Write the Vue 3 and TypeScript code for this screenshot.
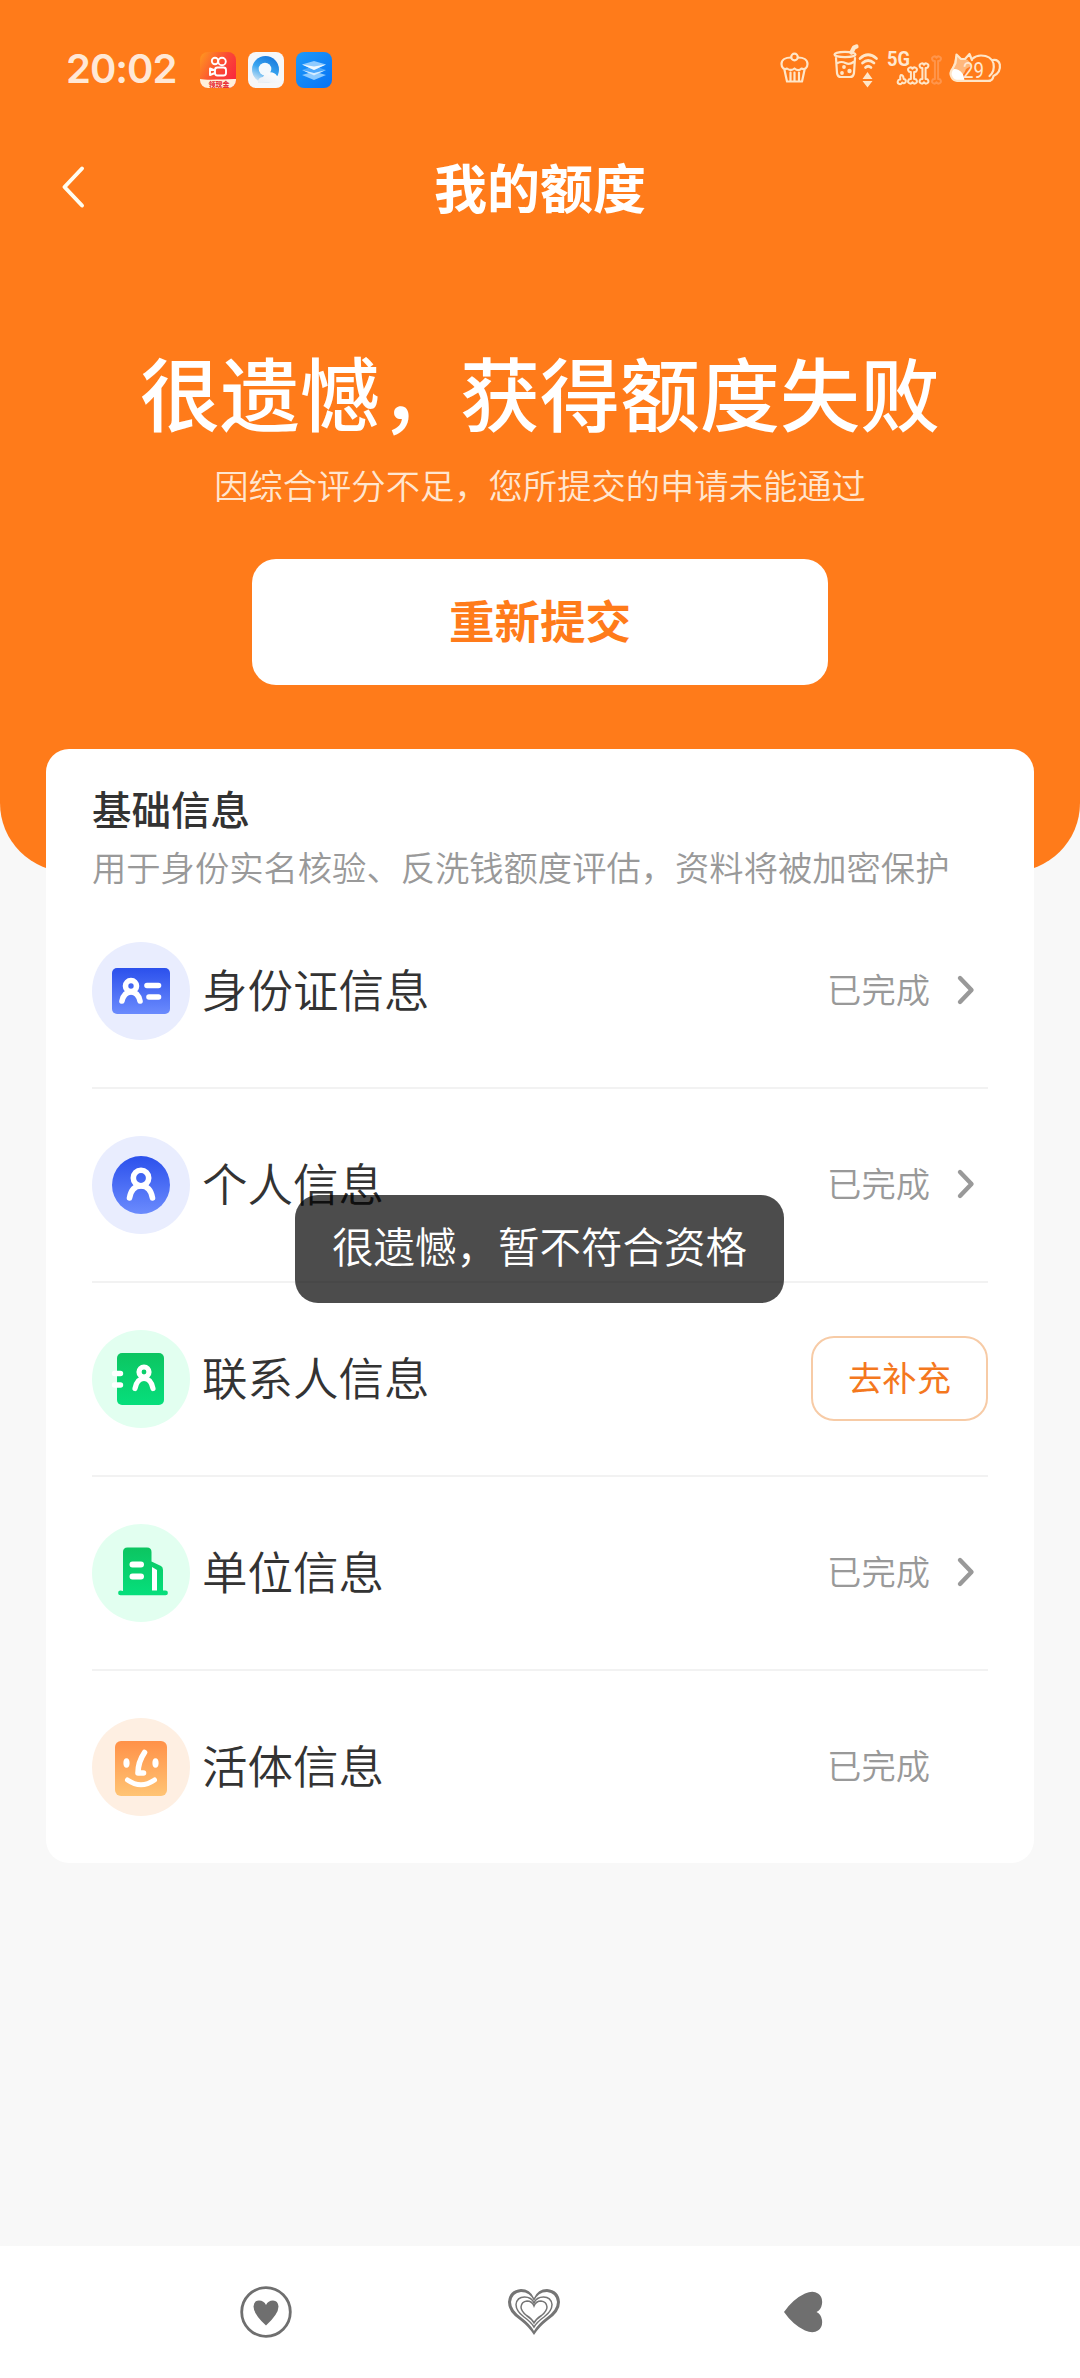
<script setup lang="ts">
type IconName = 'idcard' | 'person' | 'contact' | 'company' | 'face'

interface InfoRow {
  icon: IconName
  label: string
  status: 'done' | 'todo'
  arrow: boolean
}

const rows: InfoRow[] = [
  { icon: 'idcard', label: '身份证信息', status: 'done', arrow: true },
  { icon: 'person', label: '个人信息', status: 'done', arrow: true },
  { icon: 'contact', label: '联系人信息', status: 'todo', arrow: false },
  { icon: 'company', label: '单位信息', status: 'done', arrow: true },
  { icon: 'face', label: '活体信息', status: 'done', arrow: false },
]

// Outline of an upright bone centred on x, from top to bottom.
function bone(x: number, top: number, bottom: number): string {
  const knob = 'A2.3 2.3 0 1 1'
  return (
    `M${x - 1.6} ${bottom - 5}V${top + 5}${knob} ${x} ${top + 1.8}${knob} ${x + 1.6} ${top + 5}` +
    `V${bottom - 5}${knob} ${x} ${bottom - 1.8}${knob} ${x - 1.6} ${bottom - 5}z`
  )
}
</script>

<template>
  <div class="page">
    <header class="hero">
      <div class="status-bar">
        <span class="clock">20:02</span>
        <div class="apps">
          <svg width="36" height="36" viewBox="0 0 36 36">
            <defs>
              <linearGradient id="ks" x1="0" y1="0" x2="1" y2="0.6">
                <stop offset="0" stop-color="#ff9a1e" />
                <stop offset="0.6" stop-color="#fb4a35" />
                <stop offset="1" stop-color="#fa2b3d" />
              </linearGradient>
              <clipPath id="ksClip"><rect width="36" height="36" rx="8" /></clipPath>
            </defs>
            <g clip-path="url(#ksClip)">
              <rect width="36" height="36" fill="url(#ks)" />
              <g fill="none" stroke="#fff" stroke-width="1.9" stroke-linejoin="round">
                <circle cx="15" cy="9" r="3.2" />
                <circle cx="22" cy="9.5" r="3.8" />
                <rect x="15" y="15.500" width="11" height="8" rx="2.500" />
                <path d="M15 18.500l-5-2v6.500l5-2" />
              </g>
              <path d="M0 27q5 1 17 .6T34 27l2 0v9H0z" fill="#fff1da" />
              <text x="19" y="34.500" text-anchor="middle" class="badge-text">领现金</text>
            </g>
          </svg>
          <svg width="36" height="36" viewBox="0 0 36 36">
            <defs>
              <linearGradient id="qb" x1="0.7" y1="0" x2="0.2" y2="1">
                <stop offset="0" stop-color="#1677dc" />
                <stop offset="0.5" stop-color="#39a5f0" />
                <stop offset="1" stop-color="#e4eef5" />
              </linearGradient>
              <linearGradient id="cloud" x1="0" y1="1" x2="1" y2="0">
                <stop offset="0" stop-color="#e9eef4" />
                <stop offset="1" stop-color="#ffffff" />
              </linearGradient>
            </defs>
            <rect width="36" height="36" rx="8" fill="#f6f7f9" />
            <circle cx="17.500" cy="17.500" r="13.500" fill="url(#qb)" />
            <circle cx="17" cy="17" r="6.300" fill="#f3f9fd" />
            <path d="M10 31a5 5 0 0 1 5-6 8 8 0 0 1 14-1q4 2 2.500 6.500z" fill="url(#cloud)" />
          </svg>
          <svg width="36" height="36" viewBox="0 0 36 36">
            <defs>
              <linearGradient id="st" x1="0" y1="0" x2="1" y2="1">
                <stop offset="0" stop-color="#1d9af9" />
                <stop offset="1" stop-color="#0872f5" />
              </linearGradient>
            </defs>
            <rect width="36" height="36" rx="8" fill="url(#st)" />
            <path d="M6 23l12-3.500L30 23l-12 5z" fill="#8ccaff" />
            <path d="M6 18l12-4 12 4-12 5.200z" fill="#4ba8fd" />
            <path d="M6 18l12 3 12-3-12 5.500z" fill="#d5ecff" />
            <path d="M6 12.500L18 9l12 3.500L18 18z" fill="#8fcbff" />
            <path d="M6 12.500l12 2 12-2L18 18z" fill="#f0f9ff" />
          </svg>
        </div>
        <svg class="sys" width="240" height="50" viewBox="0 0 240 50" fill="none" stroke="#ffe6c8" stroke-width="2.200" stroke-linecap="round" stroke-linejoin="round">
          <!-- cupcake -->
          <circle cx="14.500" cy="17" r="3.300" />
          <path d="M11 17.500C5.500 17.500 1.500 20 1.500 24c0 4 3 6 5.500 4.500 2.500 2 5 2 7.500 0 2.500 2 5 2 7 0 3 1.500 6-.5 6-4.500 0-4-4-6.500-9.500-6.500" />
          <path d="M4.500 30l2.500 11.500h15L24.500 30M10.500 32.500v8.500M14.500 32.500v8.500M19 32.500v8.500" />
          <!-- milk tea -->
          <ellipse cx="65" cy="14.500" rx="10.500" ry="2.700" />
          <path d="M56 18l1 15q.5 4 4 4h9q3.500 0 4-4l1-15M57.500 23q4-2 8 0t8-1" />
          <path d="M71.500 12.500l2.500-5 2.500-1" stroke-width="4.200" />
          <g fill="#ffe6c8" stroke="none">
            <circle cx="64" cy="27" r="1.900" />
            <circle cx="69.500" cy="31" r="2.200" />
            <circle cx="62" cy="33" r="1.900" />
            <path d="M87.500 32l5 7h-10zM87.500 47.500l5-6.500h-10z" />
          </g>
          <!-- wifi -->
          <path d="M80 18.500q8-7.500 16.500 0M82.500 23q5.500-5 11.500 0M85.500 27.500q2.500-2.500 5.500 0" stroke-width="2.700" />
          <!-- bone signal bars -->
          <g stroke-width="2">
            <path d="M120.300 39.500q-.5-4 .7-4.500 2.500 0 2.700 4A2.100 2.100 0 1 1 122.200 42.500A2.300 2.300 0 1 1 120.300 39.500z" />
            <path :d="bone(132.500, 27, 44)" />
            <path :d="bone(144, 23, 44)" />
            <path :d="bone(156.500, 16, 44)" stroke="#ff954b" />
          </g>
          <!-- cat battery -->
          <path d="M176 15.500q4 3 9 3.500 5 1 6 7l-5 3q-2 6-6 7l-8-7z" fill="#ffb87c" stroke="none" />
          <path d="M171.500 30q3-2 7 0 5 2 6 10.500h-9q-7-2-4-10.500z" fill="#fff" stroke="none" />
          <path d="M173 28l2.500-5 1-8.500L181 19h4l4.500-5 2.500 6" />
          <path d="M192 19q4-3.500 9-3.500 10 0 12.500 8 1.500 8-4 12.500" />
          <path d="M173 28q-4 5-1.500 9 2 3.800 5.500 3.800h33" />
          <path d="M212.500 20q6-1 7.300 4.500 1.200 8-6.300 11.500-1 4.800-4.500 4.800" />
          <g class="sys-text">
            <text x="107" y="25.500" class="net" textLength="23" lengthAdjust="spacingAndGlyphs">5G</text>
            <text x="183" y="38" class="bat" textLength="21" lengthAdjust="spacingAndGlyphs">29</text>
          </g>
        </svg>
      </div>

      <nav class="title-bar">
        <svg class="back" width="26" height="46" viewBox="0 0 26 46" fill="none" stroke="#fffdf0" stroke-width="4" stroke-linecap="round" stroke-linejoin="round">
          <path d="M22 4.500L4.500 23 22 41.500" />
        </svg>
        <h1>我的额度</h1>
      </nav>

      <h2 class="result">很遗憾，获得额度失败</h2>
      <p class="reason">因综合评分不足，您所提交的申请未能通过</p>
      <button class="resubmit">重新提交</button>
    </header>

    <main class="card">
      <h3>基础信息</h3>
      <p class="hint">用于身份实名核验、反洗钱额度评估，资料将被加密保护</p>
      <ul>
        <li v-for="row in rows" :key="row.label">
          <svg class="row-icon" width="98" height="98" viewBox="0 0 98 98" fill="none" stroke-linecap="round" stroke-linejoin="round">
            <defs>
              <linearGradient id="blue" x1="0" y1="0" x2="0" y2="1">
                <stop offset="0" stop-color="#2b50ec" /><stop offset="1" stop-color="#6b8bfd" />
              </linearGradient>
              <linearGradient id="green" x1="0" y1="0" x2="0" y2="1">
                <stop offset="0" stop-color="#0cc561" /><stop offset="1" stop-color="#06df7c" />
              </linearGradient>
              <linearGradient id="amber" x1="0" y1="0" x2="0" y2="1">
                <stop offset="0" stop-color="#ff9148" /><stop offset="1" stop-color="#ffc474" />
              </linearGradient>
            </defs>
            <template v-if="row.icon === 'idcard'">
              <circle cx="49" cy="49" r="49" fill="#e9edfe" />
              <rect x="20" y="26" width="58" height="46" rx="5" fill="url(#blue)" />
              <g stroke="#fff" stroke-width="5.600">
                <circle cx="39" cy="44" r="5.500" />
                <path d="M30 59q2-9 9-9t9 9" />
                <path d="M55 43.500H66.500M57 55H66.500" />
              </g>
            </template>
            <template v-else-if="row.icon === 'person'">
              <circle cx="49" cy="49" r="49" fill="#e9edfe" />
              <circle cx="49" cy="49" r="29" fill="url(#blue)" />
              <g stroke="#fff" stroke-width="5.600">
                <circle cx="49" cy="42" r="7.700" />
                <path d="M37.500 62q2-12 11.500-12t11.500 12" />
              </g>
            </template>
            <template v-else-if="row.icon === 'contact'">
              <circle cx="49" cy="49" r="49" fill="#e2fff0" />
              <rect x="25" y="23" width="47" height="52" rx="5" fill="url(#green)" />
              <path d="M22.500 43.500H28.500M22.500 55H28.500" stroke="#fff" stroke-width="5.400" />
              <g stroke="#fff" stroke-width="5.200">
                <circle cx="52" cy="42" r="5" />
                <path d="M43 58.500q2-10 9-10t9 10" />
              </g>
            </template>
            <template v-else-if="row.icon === 'company'">
              <circle cx="49" cy="49" r="49" fill="#e2fff0" />
              <path d="M31 67V28q0-4.500 4.500-4.500H55q4.500 0 4.500 4.500v9.500L69 42q2 1.200 2 4v20.500h2.500a2.400 2.400 0 0 1 0 4.800H28.500a2.400 2.400 0 0 1 0-4.800z" fill="url(#green)" />
              <path d="M60 43l5 3v20.500h-5z" fill="#fff" />
              <path d="M40.500 40.500H49M40.500 52.500H49" stroke="#fff" stroke-width="6" />
            </template>
            <template v-else>
              <circle cx="49" cy="49" r="49" fill="#feefe2" />
              <rect x="23" y="23" width="52" height="55" rx="6" fill="url(#amber)" />
              <ellipse cx="34.500" cy="45" rx="3.100" ry="4.800" fill="#fff" />
              <ellipse cx="63.500" cy="45" rx="3.100" ry="4.800" fill="#fff" />
              <path d="M52.500 34.500Q46 44 46 55h5.500" stroke="#fff" stroke-width="5.600" />
              <path d="M35.500 62q13.500 9.500 27 0" stroke="#fff" stroke-width="5" />
            </template>
          </svg>
          <span class="label">{{ row.label }}</span>
          <button v-if="row.status === 'todo'" class="fill">去补充</button>
          <template v-else>
            <span class="done">已完成</span>
            <span class="arrow">
              <svg v-if="row.arrow" width="20" height="32" viewBox="0 0 20 32" fill="none" stroke="#999" stroke-width="4.400" stroke-linecap="round" stroke-linejoin="round">
                <path d="M4 4L15.500 16 4 28" />
              </svg>
            </span>
          </template>
        </li>
      </ul>
    </main>

    <div class="toast">很遗憾，暂不符合资格</div>

    <footer class="nav">
      <svg width="52" height="52" viewBox="0 0 52 52">
        <circle cx="26" cy="26" r="24.300" fill="none" stroke="#6f6f6f" stroke-width="2.800" />
        <path d="M26 39.500Q13.500 28 13.500 20.500q.5-6 5.500-6 5 .2 7 4.500 2-4.300 7-4.500 5 0 5.500 6Q38.500 28 26 39.500z" fill="#6f6f6f" />
      </svg>
      <svg class="home" width="54" height="52" viewBox="0 0 54 52">
        <path fill="#757575" fill-rule="evenodd" d="M27 49Q22 41 13 34 1 26 1 16 2 4 14 3q9 0 13 9 4-9 13-9 12 1 13 13 0 10-12 18-9 7-14 15zM27 45q4-7 12-13 11-8 11-16-1-9-10-10-9 0-13 9-4-9-13-9Q5 7 4 16q0 8 11 16 8 6 12 13z" />
        <g fill="none" stroke="#757575" stroke-width="1.500">
          <path d="M27 41Q24 36 17 31 9 25 9 18.500 10 11 17.500 11q7 0 9.500 6 2.500-6 9.500-6 7.500 0 8.500 7.500 0 6.500-8 12.500-7 5-10 10z" />
          <path d="M27 37Q25 33 19.500 29.500 14 25 14 21q.5-5.500 6-6 5 0 7 5 2-5 7-5 5.500.5 6 6 0 4-5.500 8.500Q29 33 27 37z" />
        </g>
      </svg>
      <svg width="40" height="42" viewBox="0 0 40 42">
        <path d="M1 21Q10 8 22 2.500q8-3.500 13 0Q40 6 39 13q-1 6-5.500 8 4.500 2 5.500 8 1 7-4 10.500-5 3.500-13 0Q10 34 1 21z" fill="#6f6f6f" />
      </svg>
    </footer>
  </div>
</template>

<style>
body {
  margin: 0;
  background: #f8f8f8;
}
</style>

<style scoped>
* {
  box-sizing: border-box;
  margin: 0;
  padding: 0;
}
.page {
  position: relative;
  display: flex;
  flex-direction: column;
  width: 1080px;
  height: 2378px;
  background: #f8f8f8;
  font-family: 'Noto Sans CJK SC', 'Noto Sans', sans-serif;
  color: #333;
}
.hero {
  display: flex;
  flex-direction: column;
  align-items: center;
  flex: none;
  height: 872px;
  background: #ff7b1a;
  border-radius: 0 0 69px 69px;
}
.status-bar {
  display: flex;
  align-items: center;
  width: 100%;
  height: 140px;
  padding: 0 68px 0 66px;
}
.clock {
  width: 134px;
  padding-bottom: 2px;
  font: 600 40px/1 Inter, sans-serif;
  letter-spacing: -1px;
  color: #ffe8d6;
}
.apps {
  display: flex;
  gap: 12px;
}
.sys {
  margin-left: auto;
  margin-right: -8px;
  margin-bottom: 10px;
}
.sys-text {
  fill: #ffe8d0;
  stroke: none;
  font-family: Roboto, sans-serif;
}
.net {
  font-size: 21px;
  font-weight: 700;
}
.bat {
  font-size: 22px;
}
.badge-text {
  fill: #e8343a;
  font-size: 7px;
  font-weight: 900;
}
.title-bar {
  display: flex;
  align-items: center;
  justify-content: center;
  position: relative;
  width: 100%;
  height: 96px;
  padding-bottom: 5px;
}
.back {
  position: absolute;
  left: 60px;
  top: 24px;
}
h1 {
  font-size: 53px;
  font-weight: 700;
  line-height: 80px;
  color: #fff;
}
.result {
  margin-top: 96px;
  font-size: 80px;
  font-weight: 500;
  line-height: 116px;
  color: #fff;
  white-space: nowrap;
}
.reason {
  margin-top: 11px;
  font-size: 34.300px;
  font-weight: 350;
  line-height: 50px;
  color: #ffe6d0;
  white-space: nowrap;
}
.resubmit {
  margin-top: 50px;
  width: 576px;
  height: 126px;
  padding-bottom: 4px;
  border: 0;
  border-radius: 24px;
  background: #fff;
  color: #ff7b1a;
  font: 700 45.500px/1 'Noto Sans CJK SC', sans-serif;
}
.card {
  display: flex;
  flex-direction: column;
  flex: none;
  width: 988px;
  height: 1114px;
  margin: -123px auto 0;
  padding: 31px 46px 0;
  border-radius: 23px;
  background: #fff;
}
h3 {
  font-size: 39.500px;
  font-weight: 500;
  line-height: 56px;
}
.hint {
  margin-top: 5px;
  font-size: 34.300px;
  font-weight: 350;
  line-height: 50px;
  color: #999;
  white-space: nowrap;
}
ul {
  margin-top: 4px;
  list-style: none;
}
li {
  display: flex;
  align-items: center;
  height: 194px;
  border-bottom: 2px solid #f2f2f2;
}
li:last-child {
  border-bottom-color: transparent;
}
.row-icon {
  flex: none;
}
.label {
  margin-left: 12px;
  font-size: 45.500px;
  font-weight: 350;
  line-height: 64px;
  padding-bottom: 7px;
}
.done {
  margin-left: auto;
  font-size: 34.300px;
  font-weight: 350;
  line-height: 50px;
  padding-bottom: 7px;
  color: #999;
}
.arrow {
  display: flex;
  width: 58px;
  height: 32px;
  padding-left: 26px;
  margin-bottom: 2px;
}
.fill {
  width: 177px;
  height: 85px;
  margin-left: auto;
  margin-bottom: 2px;
  padding-bottom: 4px;
  border: 2px solid #f7cba6;
  border-radius: 23px;
  background: #fff;
  color: #f4781e;
  font: 400 34.300px/1 'Noto Sans CJK SC', sans-serif;
}
.toast {
  position: absolute;
  left: 295px;
  top: 1195px;
  width: 489px;
  height: 108px;
  border-radius: 23px;
  background: rgba(0, 0, 0, 0.7);
  color: #fff;
  font-size: 41.500px;
  line-height: 101px;
  font-weight: 350;
  text-align: center;
  white-space: nowrap;
}
.nav {
  display: flex;
  align-items: center;
  justify-content: space-between;
  height: 132px;
  margin-top: auto;
  padding: 0 257px 0 240px;
  background: #fff;
}
.home {
  margin-right: 7px;
}
</style>
